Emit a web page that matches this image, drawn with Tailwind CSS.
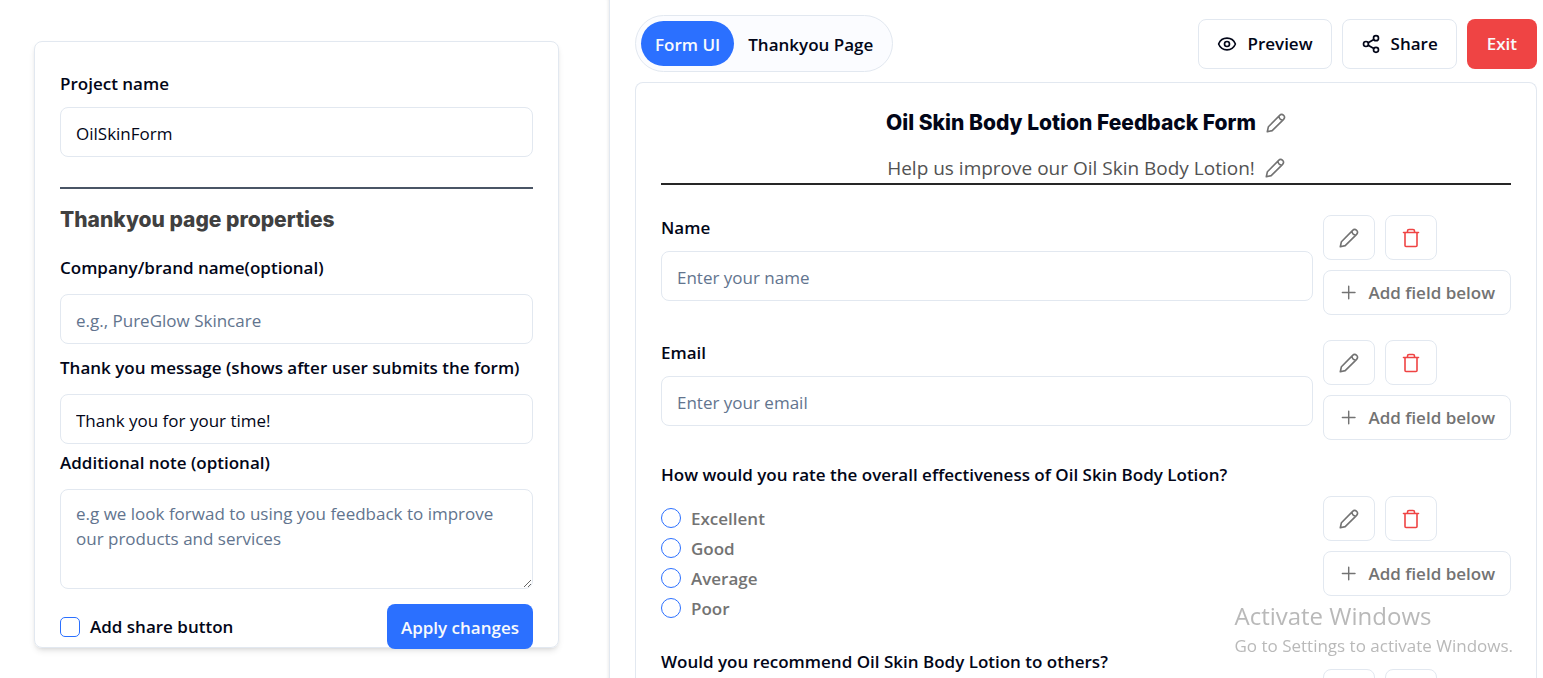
<!DOCTYPE html>
<html lang="en">
<head>
  <meta charset="UTF-8">
  <meta name="viewport" content="width=device-width, initial-scale=1.0">
  <title>Form Editor</title>
  <script src="https://cdn.jsdelivr.net/npm/@tailwindcss/browser@4"></script>
</head>
<body class="h-screen overflow-hidden bg-white font-['Open_Sans',sans-serif] text-[17px] leading-[25px] text-slate-950">
  <svg class="hidden" xmlns="http://www.w3.org/2000/svg">
    <symbol id="pencil" viewBox="0 0 20 20" fill="none" stroke="currentColor" stroke-width="1.6" stroke-linecap="round" stroke-linejoin="round">
      <path d="M1.3 18.7 L2.4 13.8 L13.4 2.6 Q15.6 .4 17.6 2.3 Q19.6 4.3 17.4 6.6 L6.2 17.6 Z M13 3.2 Q13.2 6.7 16.8 7"></path>
    </symbol>
    <symbol id="trash" viewBox="0 0 20 20" fill="none" stroke="currentColor" stroke-width="1.6" stroke-linecap="round" stroke-linejoin="round">
      <path d="M2.5 4.5 H17.5 M4 4.5 V17.5 Q4 18.5 5 18.5 H15 Q16 18.5 16 17.5 V4.5 M6.5 4.5 V3 Q6.5 1.5 8 1.5 H12 Q13.5 1.5 13.5 3 V4.5"></path>
    </symbol>
    <symbol id="plus" viewBox="0 0 20 20" fill="none" stroke="currentColor" stroke-width="1.5" stroke-linecap="round">
      <path d="M3.5 9.5 H16.5 M10 3 V16"></path>
    </symbol>
  </svg>

  <div class="grid h-full grid-cols-[610fr_933fr]">
    <!-- Properties -->
    <aside class="border-r border-slate-200 pt-[41px] pr-[50px] pl-[34px] shadow-[inset_-3px_0_3px_-2px_rgba(0,0,0,0.08)]">
      <form class="rounded-lg border border-slate-200 px-[25px] pt-[29px] shadow-md">
        <label for="projectName" class="block font-semibold">Project name</label>
        <input id="projectName" type="text" value="OilSkinForm" class="mt-[11px] block h-[50px] w-full rounded-lg border border-slate-200 px-[15px] pt-0.5">
        <hr class="mt-[30px] border-t-2 border-gray-600">
        <h2 class="mt-[18px] font-['Inter',sans-serif] text-[21px] leading-[25px] font-extrabold text-neutral-700">Thankyou page properties</h2>
        <label for="company" class="mt-[23px] block font-semibold">Company/brand name(optional)</label>
        <input id="company" type="text" placeholder="e.g., PureGlow Skincare" class="mt-[14px] block h-[50px] w-full rounded-lg border border-slate-200 px-[15px] pt-0.5 placeholder:text-slate-500">
        <label for="message" class="mt-[11px] block font-semibold">Thank you message (shows after user submits the form)</label>
        <input id="message" type="text" value="Thank you for your time!" class="mt-[14px] block h-[50px] w-full rounded-lg border border-slate-200 px-[15px] pt-0.5">
        <label for="note" class="mt-[6px] block font-semibold">Additional note (optional)</label>
        <textarea id="note" placeholder="e.g we look forwad to using you feedback to improve our products and services" class="mt-[14px] block h-[100px] w-full rounded-lg border border-slate-200 px-[15px] py-[11px] placeholder:text-slate-500"></textarea>
        <div class="mt-[15px] -mb-0.5 flex items-center justify-between">
          <label class="flex items-center gap-[10px] font-semibold">
            <input type="checkbox" class="size-5 appearance-none rounded-[5px] border border-[#2b70ff] checked:bg-[#2b70ff]">
            Add share button
          </label>
          <button type="button" class="h-[45px] rounded-lg bg-[#2b70ff] px-[14px] pt-0.5 font-semibold text-slate-50">Apply changes</button>
        </div>
      </form>
    </aside>

    <!-- Form preview -->
    <main class="flex min-h-0 min-w-0 flex-col pt-[15px] pr-[6px] pl-[25px]">
      <header class="flex items-center justify-between">
        <nav class="flex rounded-full border border-slate-200 bg-[#fbfcff] p-[5px] font-semibold">
          <button type="button" class="h-[45px] rounded-full bg-[#2b70ff] px-[14px] pt-0.5 text-slate-50">Form UI</button>
          <button type="button" class="h-[45px] rounded-full px-[14px] pt-0.5">Thankyou Page</button>
        </nav>
        <div class="flex gap-[10px] font-semibold">
          <button type="button" class="flex h-[50px] items-center gap-[10px] rounded-lg border border-slate-200 px-[18px]">
            <svg class="size-5" viewBox="0 0 24 24" fill="none" stroke="currentColor" stroke-width="2" stroke-linecap="round" stroke-linejoin="round"><path d="M2.062 12.348a1 1 0 0 1 0-.696 10.75 10.75 0 0 1 19.876 0 1 1 0 0 1 0 .696 10.75 10.75 0 0 1-19.876 0"></path><circle cx="12" cy="12" r="3"></circle></svg>
            Preview
          </button>
          <button type="button" class="flex h-[50px] items-center gap-[10px] rounded-lg border border-slate-200 px-[18px]">
            <svg class="size-5" viewBox="0 0 24 24" fill="none" stroke="currentColor" stroke-width="2" stroke-linecap="round" stroke-linejoin="round"><circle cx="18" cy="5" r="3"></circle><circle cx="6" cy="12" r="3"></circle><circle cx="18" cy="19" r="3"></circle><path d="M8.59 13.51l6.83 3.98M15.41 6.51l-6.82 3.98"></path></svg>
            Share
          </button>
          <button type="button" class="h-[50px] rounded-lg bg-[#ef4444] px-5 text-slate-50">Exit</button>
        </div>
      </header>

      <section class="mt-[10px] min-h-0 flex-1 overflow-hidden rounded-t-lg border border-b-0 border-slate-200 px-[25px] pt-[25px]">
        <div class="flex items-center justify-center gap-[10px]">
          <h1 class="font-['Inter',sans-serif] text-[21px] leading-[30px] font-extrabold">Oil Skin Body Lotion Feedback Form</h1>
          <button type="button" aria-label="Edit title" class="text-neutral-500"><svg class="size-5"><use href="#pencil"></use></svg></button>
        </div>
        <div class="mt-[15px] flex items-center justify-center gap-[10px] border-b-2 border-neutral-800 text-neutral-600">
          <p class="text-[19px] leading-[30px]">Help us improve our Oil Skin Body Lotion!</p>
          <button type="button" aria-label="Edit description" class="text-neutral-500"><svg class="size-5"><use href="#pencil"></use></svg></button>
        </div>

        <div class="mt-[30px] flex gap-[10px]">
          <div class="flex-1">
            <label for="name" class="block font-semibold">Name</label>
            <input id="name" type="text" placeholder="Enter your name" class="mt-[11px] block h-[50px] w-full rounded-lg border border-slate-200 px-[15px] pt-0.5 placeholder:text-slate-500">
          </div>
          <div class="grid w-[188px] grid-cols-[52px_52px] gap-[10px] font-semibold text-neutral-500">
            <button type="button" aria-label="Edit field" class="grid h-[45px] place-items-center rounded-lg border border-slate-200"><svg class="size-5"><use href="#pencil"></use></svg></button>
            <button type="button" aria-label="Delete field" class="grid h-[45px] place-items-center rounded-lg border border-slate-200 text-[#ef4444]"><svg class="size-5"><use href="#trash"></use></svg></button>
            <button type="button" class="col-span-2 flex h-[45px] w-[188px] items-center gap-[10px] rounded-lg border border-slate-200 px-[15px] whitespace-nowrap"><svg class="size-5"><use href="#plus"></use></svg>Add field below</button>
          </div>
        </div>

        <div class="mt-[25px] flex gap-[10px]">
          <div class="flex-1">
            <label for="email" class="block font-semibold">Email</label>
            <input id="email" type="email" placeholder="Enter your email" class="mt-[11px] block h-[50px] w-full rounded-lg border border-slate-200 px-[15px] pt-0.5 placeholder:text-slate-500">
          </div>
          <div class="grid w-[188px] grid-cols-[52px_52px] gap-[10px] font-semibold text-neutral-500">
            <button type="button" aria-label="Edit field" class="grid h-[45px] place-items-center rounded-lg border border-slate-200"><svg class="size-5"><use href="#pencil"></use></svg></button>
            <button type="button" aria-label="Delete field" class="grid h-[45px] place-items-center rounded-lg border border-slate-200 text-[#ef4444]"><svg class="size-5"><use href="#trash"></use></svg></button>
            <button type="button" class="col-span-2 flex h-[45px] w-[188px] items-center gap-[10px] rounded-lg border border-slate-200 px-[15px] whitespace-nowrap"><svg class="size-5"><use href="#plus"></use></svg>Add field below</button>
          </div>
        </div>

        <div class="mt-[22px] flex items-end gap-[10px]">
          <fieldset class="flex-1">
            <legend class="font-semibold">How would you rate the overall effectiveness of Oil Skin Body Lotion?</legend>
            <div class="mt-[21px] flex flex-col gap-[10px] font-semibold text-neutral-500">
              <label class="flex h-5 items-center gap-[10px]"><input type="radio" name="rating" class="size-5 appearance-none rounded-full border border-[#2b70ff] checked:bg-[#2b70ff]">Excellent</label>
              <label class="flex h-5 items-center gap-[10px]"><input type="radio" name="rating" class="size-5 appearance-none rounded-full border border-[#2b70ff] checked:bg-[#2b70ff]">Good</label>
              <label class="flex h-5 items-center gap-[10px]"><input type="radio" name="rating" class="size-5 appearance-none rounded-full border border-[#2b70ff] checked:bg-[#2b70ff]">Average</label>
              <label class="flex h-5 items-center gap-[10px]"><input type="radio" name="rating" class="size-5 appearance-none rounded-full border border-[#2b70ff] checked:bg-[#2b70ff]">Poor</label>
            </div>
          </fieldset>
          <div class="mb-[22px] grid w-[188px] grid-cols-[52px_52px] gap-[10px] font-semibold text-neutral-500">
            <button type="button" aria-label="Edit field" class="grid h-[45px] place-items-center rounded-lg border border-slate-200"><svg class="size-5"><use href="#pencil"></use></svg></button>
            <button type="button" aria-label="Delete field" class="grid h-[45px] place-items-center rounded-lg border border-slate-200 text-[#ef4444]"><svg class="size-5"><use href="#trash"></use></svg></button>
            <button type="button" class="col-span-2 flex h-[45px] w-[188px] items-center gap-[10px] rounded-lg border border-slate-200 px-[15px] whitespace-nowrap"><svg class="size-5"><use href="#plus"></use></svg>Add field below</button>
          </div>
        </div>

        <div class="mt-[31px] flex gap-[10px]">
          <p class="flex-1 font-semibold">Would you recommend Oil Skin Body Lotion to others?</p>
          <div class="mt-5 grid w-[188px] grid-cols-[52px_52px] gap-[10px] text-neutral-500">
            <button type="button" aria-label="Edit field" class="grid h-[45px] place-items-center rounded-lg border border-slate-200"><svg class="size-5"><use href="#pencil"></use></svg></button>
            <button type="button" aria-label="Delete field" class="grid h-[45px] place-items-center rounded-lg border border-slate-200 text-[#ef4444]"><svg class="size-5"><use href="#trash"></use></svg></button>
          </div>
        </div>
      </section>
    </main>
  </div>

  <div class="pointer-events-none fixed right-[30px] bottom-5 text-neutral-400/75">
    <p class="text-2xl leading-[34px]">Activate Windows</p>
    <p class="text-[17px] leading-[25px]">Go to Settings to activate Windows.</p>
  </div>
</body>
</html>
